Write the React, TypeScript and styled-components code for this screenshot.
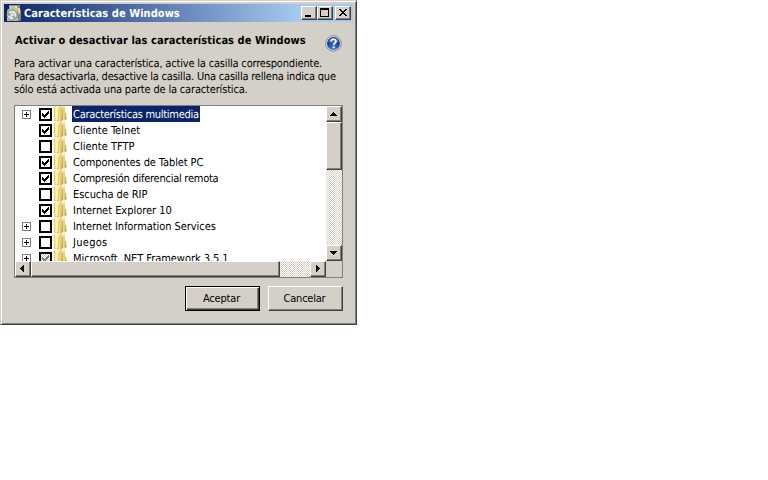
import React from "react";
import styled, { createGlobalStyle, css } from "styled-components";

const Global = createGlobalStyle`
  body { margin: 0; background: #fff; }
  * { box-sizing: border-box; }
`;

const raised = css`
  background: #d4d0c8;
  border: 1px solid;
  border-color: #fff #404040 #404040 #fff;
  box-shadow: inset -1px -1px #808080;
`;

const Dialog = styled.main`
  width: 357px;
  height: 325px;
  padding: 3px;
  border: 1px solid;
  border-color: #d4d0c8 #404040 #404040 #d4d0c8;
  box-shadow: inset 1px 1px #fff, inset -1px -1px #808080;
  background: #d4d0c8;
  color: #000;
  font: 11px/13px "DejaVu Sans Condensed", "DejaVu Sans", sans-serif;
  font-stretch: condensed;
  text-rendering: geometricPrecision;
  cursor: default;
`;

const TitleBar = styled.header`
  display: flex;
  align-items: center;
  height: 18px;
  padding: 0 2px;
  background: linear-gradient(90deg, #0a246a, #a6caf0 85%);
`;

const TitleIcon = styled.svg`
  width: 16px;
  height: 16px;
  flex: none;
`;

const Run = styled.span<{ $spacing?: number }>`
  letter-spacing: ${(p) => p.$spacing ?? 0}px;
  white-space: pre;
`;

const Title = styled.h1`
  flex: 1;
  margin: 0 0 0 2px;
  color: #fff;
  font-size: 11px;
  font-weight: bold;
`;

const WindowButton = styled.button<{ $gap?: boolean }>`
  ${raised}
  width: 16px;
  height: 14px;
  padding: 0;
  margin-left: ${(p) => (p.$gap ? 2 : 0)}px;
  display: flex;
  svg { width: 14px; height: 12px; }
`;

const Content = styled.section`
  padding: 12px 10px 0;
`;

const Heading = styled.div`
  display: flex;
  justify-content: space-between;
  height: 23px;
  padding: 0 1px 0 1px;
  h2 { margin: 0; font-size: 11px; line-height: 13px; }
`;

const Help = styled.svg`
  width: 17px;
  height: 17px;
  margin-top: 1px;
`;

const Description = styled.p`
  margin: 0;
  display: flex;
  flex-direction: column;
  height: 48px;
`;

const ListBox = styled.div`
  width: 329px;
  height: 173px;
  border: 1px solid #808080;
  background: #fff;
  display: grid;
  grid-template: 155px 16px / 311px 16px;
`;

const Rows = styled.ul`
  list-style: none;
  margin: 0;
  padding: 0;
  overflow: hidden;
`;

const Row = styled.li`
  height: 16px;
  padding-left: 7px;
  display: flex;
  align-items: center;
`;

const Expander = styled.svg`
  width: 9px;
  height: 9px;
  margin-right: 8px;
  flex: none;
`;

const ExpanderSpace = styled.span`
  width: 17px;
`;

const Check = styled.svg`
  width: 13px;
  height: 13px;
  margin-top: 1px;
  flex: none;
`;

const Folder = styled.svg`
  width: 14px;
  height: 16px;
  margin: 0 4px 0 2px;
  flex: none;
`;

const Label = styled.span<{ $selected?: boolean }>`
  height: 16px;
  line-height: 15px;
  padding: 1px 1px 0;
  ${(p) => p.$selected && css`
    width: 128px;
    color: #fff;
    background: #0a246a;
  `}
`;

const Scroll = styled.div<{ $horizontal?: boolean }>`
  display: flex;
  flex-direction: ${(p) => (p.$horizontal ? "row" : "column")};
  background: repeating-conic-gradient(#d4d0c8 0 25%, #fff 0 50%) 0 0 / 2px 2px;
`;

const Arrow = styled.button`
  ${raised}
  width: 16px;
  height: 16px;
  padding: 0;
  flex: none;
  display: flex;
  svg { width: 14px; height: 14px; }
`;

const Thumb = styled.div<{ $size: number; $horizontal?: boolean }>`
  ${raised}
  width: ${(p) => (p.$horizontal ? p.$size : 16)}px;
  height: ${(p) => (p.$horizontal ? 16 : p.$size)}px;
`;

const Track = styled.div`
  flex: 1;
`;

const Corner = styled.div`
  background: #d4d0c8;
`;

const Actions = styled.footer`
  display: flex;
  justify-content: flex-end;
  gap: 8px;
  padding-top: 8px;
`;

const ActionButton = styled.button<{ $primary?: boolean }>`
  ${raised}
  width: 75px;
  height: 25px;
  padding: 0 2px 1px 0;
  font: inherit;
  color: #000;
  ${(p) => p.$primary && css`
    border-color: #000;
    box-shadow: inset 1px 1px #fff, inset -1px -1px #404040, inset -2px -2px #808080;
  `}
`;

type State = "on" | "off" | "partial";
const features: { name: string; state: State; expandable?: boolean; spacing?: number }[] = [
  { name: "Características multimedia", state: "on", expandable: true, spacing: -0.28 },
  { name: "Cliente Telnet", state: "on" },
  { name: "Cliente TFTP", state: "off" },
  { name: "Componentes de Tablet PC", state: "on", spacing: -0.1 },
  { name: "Compresión diferencial remota", state: "on", spacing: -0.25 },
  { name: "Escucha de RIP", state: "off", spacing: -0.07 },
  { name: "Internet Explorer 10", state: "on", spacing: -0.03 },
  { name: "Internet Information Services", state: "off", expandable: true, spacing: -0.06 },
  { name: "Juegos", state: "off", expandable: true, spacing: 0.3 },
  { name: "Microsoft .NET Framework 3.5.1", state: "partial", expandable: true, spacing: -0.05 },
];

const checkPath = "M3 5v3h1v1h1v1h1v-1h1v-1h1v-1h1v-1h1v-3h-1v1h-1v1h-1v1h-1v1h-1v-1h-1v-1z";

function CheckMark({ state }: { state: State }) {
  return (
    <Check viewBox="0 0 13 13" shapeRendering="crispEdges">
      <defs>
        <pattern id="dither" width="2" height="2" patternUnits="userSpaceOnUse">
          <path d="M0 0h1v1H0zM1 1h1v1H1z" fill="#c9c5bd" />
        </pattern>
      </defs>
      <path d="M0 0h13v13H0z" />
      <path d="M2 2h9v9H2z" fill="#fff" />
      {state === "partial" && <path d="M2 2h9v9H2z" fill="url(#dither)" />}
      {state !== "off" && <path d={checkPath} fill={state === "partial" ? "#808080" : "#000"} />}
    </Check>
  );
}

function FolderIcon() {
  return (
    <Folder viewBox="0 0 14 16">
      <defs>
        <linearGradient id="folder">
          <stop stopColor="#ead37c" />
          <stop offset=".25" stopColor="#fdf5b8" />
          <stop offset=".75" stopColor="#f0dc86" />
          <stop offset="1" stopColor="#c79f38" />
        </linearGradient>
        <linearGradient id="folderBack">
          <stop stopColor="#c9a441" />
          <stop offset=".3" stopColor="#f4e596" />
          <stop offset="1" stopColor="#e0c05a" />
        </linearGradient>
      </defs>
      <path d="M6 .5h5v5.5l1.5 1.5v6.5L8 15H6z" fill="url(#folderBack)" />
      <path d="M0 .5h6L7.2 2v6.5L8 10v5.2L6 16 0 14.5z" fill="url(#folder)" />
      <path d="M.4 1v13.2l5 1.3" fill="none" stroke="#dfc263" strokeWidth=".7" />
      <path d="M5 3v5.5L4.3 10v4.5" fill="none" stroke="#e2c568" />
      <path d="M8.5 3v11" stroke="#c7a23e" strokeWidth=".8" />
      <path d="M11.5 10v3" stroke="#63a5c4" strokeWidth=".9" />
    </Folder>
  );
}

const arrows = {
  up: "M6 5h1v1h1v1h1v1h1v1H3v-1h1v-1h1v-1h1z",
  down: "M3 5h7v1H9v1H8v1H7v1H6v-1H5v-1H4v-1H3z",
  left: "M8 3v7H7V9H6V8H5V7H4V6h1V5h1V4h1V3z",
  right: "M5 3h1v1h1v1h1v1h1v1H8v1H7v1H6v1H5z",
};

function ScrollArrow({ to }: { to: keyof typeof arrows }) {
  return (
    <Arrow aria-label={to}>
      <svg viewBox="0 0 14 14" shapeRendering="crispEdges"><path d={arrows[to]} /></svg>
    </Arrow>
  );
}

const description: [string, number][] = [
  ["Para activar una característica, active la casilla correspondiente.", -0.18],
  ["Para desactivarla, desactive la casilla. Una casilla rellena indica que", -0.21],
  ["sólo está activada una parte de la característica.", -0.17],
];

export default function App() {
  return (
    <>
      <Global />
      <Dialog>
        <TitleBar>
          <TitleIcon viewBox="0 0 16 16">
            <path d="M3 0h11v5H3z" fill="#8b9292" />
            <path d="M4 1h7v3H4z" fill="#dfe3df" />
            <path d="M5 1h4v3H5z" fill="#b5c4b1" />
            <path d="M2 4h9l4 1v10l-3 1H1V6z" fill="#b4b8b3" />
            <path d="M11 4l4 1v10l-3 1z" fill="#858b8b" />
            <path d="M9 3h5v6l-2-3-3-1z" fill="#ecc24c" />
            <path d="M13 3v6" stroke="#fff0b5" />
            <circle cx="6" cy="10" r="5" fill="#dfe2dd" stroke="#7c847c" strokeWidth=".8" />
            <path d="M6 10L2 7v4zM6 10l4 2-2 3z" fill="#98a494" />
            <circle cx="6" cy="10" r="1.5" fill="#fafcf9" stroke="#899087" strokeWidth=".5" />
          </TitleIcon>
          <Title><Run $spacing={0.05}>Características de Windows</Run></Title>
          <WindowButton aria-label="Minimizar">
            <svg viewBox="0 0 14 12" shapeRendering="crispEdges"><path d="M3 8h6v2H3z" /></svg>
          </WindowButton>
          <WindowButton aria-label="Maximizar">
            <svg viewBox="0 0 14 12" shapeRendering="crispEdges"><path fillRule="evenodd" d="M2 1h9v9H2zM3 3v6h7V3z" /></svg>
          </WindowButton>
          <WindowButton $gap aria-label="Cerrar">
            <svg viewBox="0 0 14 12" shapeRendering="crispEdges"><path d="M3 2h2v1h1v1h2V3h1V2h2v1h-1v1H9v1H8v1h1v1h1v1h1v1H9V8H8V7H6v1H5v1H3V8h1V7h1V6h1V5H5V4H4V3H3z" /></svg>
          </WindowButton>
        </TitleBar>
        <Content>
          <Heading>
            <h2><Run $spacing={0.06}>Activar o desactivar las características de Windows</Run></h2>
            <Help viewBox="0 0 17 17">
              <defs>
                <radialGradient id="help" cy=".85"><stop stopColor="#448bd9" /><stop offset="1" stopColor="#173b9c" /></radialGradient>
              </defs>
              <circle cx="8.5" cy="8.5" r="7.8" fill="#dfe2e7" stroke="#7f858f" strokeWidth="1" />
              <circle cx="8.5" cy="8.5" r="6.5" fill="url(#help)" />
              <path d="M3 7a5.8 5 0 0 1 11 0q-5 2-11 0z" fill="#6d8fd1" opacity=".6" />
              <path d="M6.2 6.4c.2-3 4.9-2.8 4.7 0 0 1.7-2.2 1.7-2.2 3.6" fill="none" stroke="#fff" strokeWidth="1.7" />
              <path d="M7.8 11.4h1.8v1.8H7.8z" fill="#fff" />
            </Help>
          </Heading>
          <Description>
            {description.map(([text, spacing]) => <Run key={text} $spacing={spacing}>{text}</Run>)}
          </Description>
          <ListBox>
            <Rows>
              {features.map((f, i) => (
                <Row key={f.name}>
                  {f.expandable ? (
                    <Expander viewBox="0 0 9 9" shapeRendering="crispEdges">
                      <path d="M0 0h9v9H0z" fill="#808080" /><path d="M1 1h7v7H1z" fill="#fff" />
                      <path d="M2 4h5v1H2zM4 2h1v5H4z" />
                    </Expander>
                  ) : <ExpanderSpace />}
                  <CheckMark state={f.state} />
                  <FolderIcon />
                  <Label $selected={i === 0}><Run $spacing={f.spacing}>{f.name}</Run></Label>
                </Row>
              ))}
            </Rows>
            <Scroll><ScrollArrow to="up" /><Thumb $size={48} /><Track /><ScrollArrow to="down" /></Scroll>
            <Scroll $horizontal><ScrollArrow to="left" /><Thumb $horizontal $size={249} /><Track /><ScrollArrow to="right" /></Scroll>
            <Corner />
          </ListBox>
          <Actions>
            <ActionButton $primary><Run $spacing={-0.18}>Aceptar</Run></ActionButton>
            <ActionButton><Run $spacing={-0.22}>Cancelar</Run></ActionButton>
          </Actions>
        </Content>
      </Dialog>
    </>
  );
}
